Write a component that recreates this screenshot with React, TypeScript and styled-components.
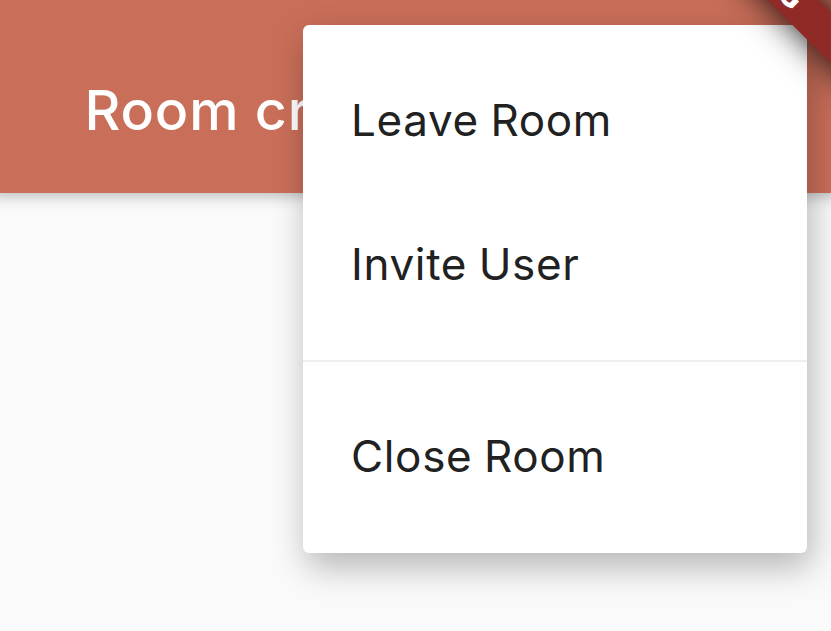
import styled, { createGlobalStyle } from "styled-components";

const GlobalStyle = createGlobalStyle`
  * { box-sizing: border-box; }
  body { margin: 0; background: #fafafa; }
`;

const Screen = styled.div`
  position: relative;
  width: 831px;
  height: 631px;
  overflow: hidden;
  background: #fafafa;
  font-family: Inter, "Liberation Sans", sans-serif;
`;

const AppBar = styled.header`
  display: flex;
  align-items: flex-start;
  height: 193px;
  padding: 76px 0 0 84.5px;
  background: #c96e59;
  box-shadow: 0 -5px 14px 8px rgba(0, 0, 0, 0.27);
`;

const Title = styled.h1`
  margin: 0;
  color: #fff;
  font-size: 55.5px;
  font-weight: 550;
  line-height: 68px;
  letter-spacing: 0.8px;
  white-space: nowrap;
`;

const Menu = styled.div`
  position: absolute;
  top: 25px;
  left: 303px;
  width: 504px;
  height: 528px;
  padding: 24px 0;
  border-radius: 6px;
  background: #fff;
  box-shadow: 4px 14px 34px rgba(0, 0, 0, 0.28);
`;

const MenuItem = styled.div`
  display: flex;
  align-items: center;
  height: 144px;
  padding: 0 48px 2px;
  color: #212121;
  font-size: 44px;
  font-weight: 370;
  letter-spacing: 0.65px;
  word-spacing: -1.4px;
  white-space: nowrap;
`;

const Divider = styled.div`
  display: flex;
  align-items: center;
  height: 48px;
  &::before {
    content: "";
    flex: 1;
    height: 2px;
    background: #eee;
  }
`;

const Ribbon = styled.div`
  position: absolute;
  top: -50px;
  left: 611px;
  display: flex;
  align-items: center;
  justify-content: center;
  width: 300px;
  height: 36px;
  padding: 0 0 4px 2px;
  transform: rotate(45deg);
  background: #8f2a26;
  box-shadow: 0 0 34px rgba(0, 0, 0, 0.9);
  color: #fff;
  font-family: Roboto, "Liberation Sans", sans-serif;
  font-size: 32px;
  font-weight: 900;
`;

export default function App() {
  return (
    <Screen>
      <GlobalStyle />
      <AppBar>
        <Title>Room created</Title>
      </AppBar>
      <Menu>
        <MenuItem>Leave Room</MenuItem>
        <MenuItem>Invite User</MenuItem>
        <Divider />
        <MenuItem>Close Room</MenuItem>
      </Menu>
      <Ribbon>DEBUG</Ribbon>
    </Screen>
  );
}
